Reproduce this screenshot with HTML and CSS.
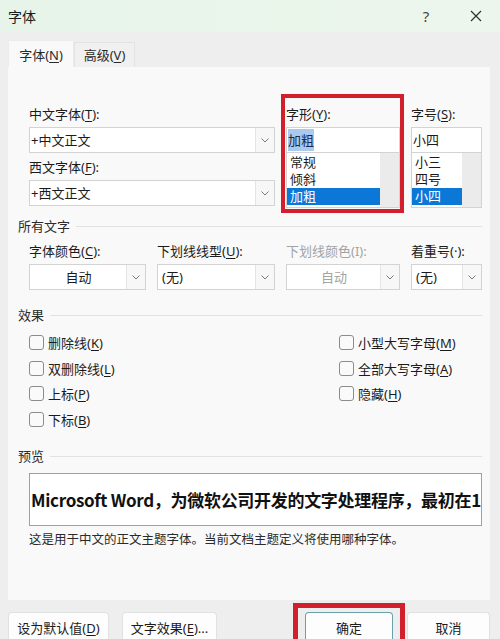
FILE: index.html
```html
<!DOCTYPE html>
<html lang="zh-CN">
<head>
  <meta charset="UTF-8" />
  <title>字体</title>
  <link rel="stylesheet" href="styles.css">
</head>
<body>
  <div class="titlebar">
    <span class="title">字体</span>
    <span class="help">?</span>
    <span class="close">
      <svg width="12" height="12" viewBox="0 0 12 12"><path d="M1 1 L11 11 M11 1 L1 11" stroke="#2b2b2b" stroke-width="1.1" fill="none"/></svg>
    </span>
  </div>

  <div class="tabs">
    <div class="tab active">字体(<u>N</u>)</div>
    <div class="tab">高级(<u>V</u>)</div>
  </div>

  <div class="panel">
    <!-- font face / style / size -->
    <div class="font-grid">
      <div class="col">
        <div class="lbl">中文字体(<u>T</u>):</div>
        <div class="combo">
          <span class="combo-text">+中文正文</span>
          <span class="combo-arrow"><svg width="8" height="5" viewBox="0 0 8 5"><path d="M0.5 0.5 L4 4 L7.5 0.5" stroke="#7a7a7a" fill="none"/></svg></span>
        </div>
        <div class="lbl lbl-next">西文字体(<u>F</u>):</div>
        <div class="combo">
          <span class="combo-text">+西文正文</span>
          <span class="combo-arrow"><svg width="8" height="5" viewBox="0 0 8 5"><path d="M0.5 0.5 L4 4 L7.5 0.5" stroke="#7a7a7a" fill="none"/></svg></span>
        </div>
      </div>

      <div class="col marked">
        <div class="lbl">字形(<u>Y</u>):</div>
        <div class="edit"><span class="sel-text">加粗</span></div>
        <div class="listbox">
          <div class="items">
            <div class="item">常规</div>
            <div class="item">倾斜</div>
            <div class="item selected">加粗</div>
          </div>
          <div class="scroll"></div>
        </div>
      </div>

      <div class="col">
        <div class="lbl">字号(<u>S</u>):</div>
        <div class="edit">小四</div>
        <div class="listbox">
          <div class="items">
            <div class="item">小三</div>
            <div class="item">四号</div>
            <div class="item selected">小四</div>
          </div>
          <div class="scroll"></div>
        </div>
      </div>
    </div>

    <div class="group-head">所有文字</div>
    <div class="attr-grid">
      <div class="col">
        <div class="lbl">字体颜色(<u>C</u>):</div>
        <div class="combo combo-small">
          <span class="combo-text center">自动</span>
          <span class="combo-arrow"><svg width="8" height="5" viewBox="0 0 8 5"><path d="M0.5 0.5 L4 4 L7.5 0.5" stroke="#7a7a7a" fill="none"/></svg></span>
        </div>
      </div>
      <div class="col">
        <div class="lbl">下划线线型(<u>U</u>):</div>
        <div class="combo combo-small">
          <span class="combo-text pad">(无)</span>
          <span class="combo-arrow"><svg width="8" height="5" viewBox="0 0 8 5"><path d="M0.5 0.5 L4 4 L7.5 0.5" stroke="#7a7a7a" fill="none"/></svg></span>
        </div>
      </div>
      <div class="col disabled">
        <div class="lbl">下划线颜色(I):</div>
        <div class="combo combo-small">
          <span class="combo-text center">自动</span>
          <span class="combo-arrow"><svg width="8" height="5" viewBox="0 0 8 5"><path d="M0.5 0.5 L4 4 L7.5 0.5" stroke="#7a7a7a" fill="none"/></svg></span>
        </div>
      </div>
      <div class="col">
        <div class="lbl">着重号(·):</div>
        <div class="combo combo-small">
          <span class="combo-text pad">(无)</span>
          <span class="combo-arrow"><svg width="8" height="5" viewBox="0 0 8 5"><path d="M0.5 0.5 L4 4 L7.5 0.5" stroke="#7a7a7a" fill="none"/></svg></span>
        </div>
      </div>
    </div>

    <div class="group-head head-effects">效果</div>
    <div class="effects">
      <div class="check-col">
        <label class="check"><span class="box"></span><span>删除线(<u>K</u>)</span></label>
        <label class="check"><span class="box"></span><span>双删除线(<u>L</u>)</span></label>
        <label class="check"><span class="box"></span><span>上标(<u>P</u>)</span></label>
        <label class="check"><span class="box"></span><span>下标(<u>B</u>)</span></label>
      </div>
      <div class="check-col">
        <label class="check"><span class="box"></span><span>小型大写字母(<u>M</u>)</span></label>
        <label class="check"><span class="box"></span><span>全部大写字母(<u>A</u>)</span></label>
        <label class="check"><span class="box"></span><span>隐藏(<u>H</u>)</span></label>
      </div>
    </div>

    <div class="group-head head-preview">预览</div>
    <div class="preview">Microsoft Word，为微软公司开发的文字处理程序，最初在1983年发布</div>
    <p class="caption">这是用于中文的正文主题字体。当前文档主题定义将使用哪种字体。</p>
  </div>

  <div class="buttons">
    <div class="btn btn-default">设为默认值(<u>D</u>)</div>
    <div class="btn btn-effects">文字效果(<u>E</u>)...</div>
    <div class="btn btn-ok marked-ok">确定</div>
    <div class="btn btn-cancel">取消</div>
  </div>
</body>
</html>
```

FILE: styles.css
```css
* {
  box-sizing: border-box;
}

body {
  margin: 0;
  width: 500px;
  height: 639px;
  overflow: hidden;
  background: #eeeeee;
  font-family: "Noto Sans", "Noto Sans CJK SC", sans-serif;
  font-size: 13px;
  color: #1b1b1b;
}

u {
  text-decoration-thickness: 1px;
  text-underline-offset: 2px;
}

/* Title bar */
.titlebar {
  height: 32px;
  background: linear-gradient(to right, #e6f4e9, #edf6ec);
  display: flex;
  align-items: center;
  padding: 0 14px 0 8px;
}

.title {
  font-size: 14px;
}

.help {
  margin-left: auto;
  width: 20px;
  text-align: center;
  font-size: 15px;
  color: #444;
}

.close {
  width: 20px;
  margin-left: 30px;
  display: flex;
  justify-content: center;
}

/* Tabs */
.tabs {
  display: flex;
  margin-top: 8px;
  padding-left: 8px;
  height: 27px;
}

.tab {
  height: 25px;
  margin-top: 2px;
  width: 61px;
  line-height: 24px;
  text-align: center;
  background: #f0f0f0;
  border: 1px solid #e3e3e3;
  border-bottom: 0;
  color: #2a2a2a;
}

.tab.active {
  width: 66px;
  height: 27px;
  margin-top: 0;
  line-height: 29px;
  background: #f9f9f9;
  border-color: #ececec;
}

/* Main panel */
.panel {
  margin: 0 10px 0 8px;
  height: 533px;
  background: #f9f9f9;
  padding: 39px 8px 0 21px;
}

.lbl {
  height: 17px;
  line-height: 17px;
  white-space: nowrap;
}

.lbl-next {
  margin-top: 6px;
}

.font-grid {
  display: grid;
  grid-template-columns: 246px 114px 71px;
  column-gap: 11px;
}

.col {
  position: relative;
}

/* red annotation frame */
.marked::after {
  content: "";
  position: absolute;
  left: -5px;
  right: -4px;
  top: -12px;
  bottom: -5px;
  border: 4px solid #d21f2c;
}

.combo {
  margin-top: 4px;
  height: 26px;
  display: flex;
  background: #fff;
  border: 1px solid #d3d3d3;
}

.combo-text {
  flex: 1;
  line-height: 24px;
  padding-left: 1px;
}

.combo-text.center {
  text-align: center;
}

.combo-text.pad {
  padding-left: 4px;
}

.combo-arrow {
  width: 19px;
  background: #f7f7f7;
  border-left: 1px solid #e4e4e4;
  display: flex;
  align-items: center;
  justify-content: center;
}

.edit {
  margin-top: 4px;
  height: 26px;
  background: #fff;
  border: 1px solid #d3d3d3;
  line-height: 24px;
  padding-left: 1px;
}

.sel-text {
  background: #a9c9ee;
  color: #1a2a4a;
  padding: 2px 0;
}

.listbox {
  height: 55px;
  display: flex;
  background: #fff;
  border: 1px solid #d3d3d3;
  border-top: 0;
  padding-top: 1px;
}

.items {
  flex: 1;
}

.item {
  height: 17px;
  line-height: 17px;
  padding-left: 3px;
  overflow: hidden;
}

.item.selected {
  background: #0b78d7;
  color: #fff;
}

.scroll {
  width: 19px;
  background: #ebebeb;
  margin-top: -1px;
}

/* group headers with rule */
.group-head {
  margin: 10px 0 0 -11px;
  height: 17px;
  line-height: 17px;
  display: flex;
  align-items: center;
  gap: 6px;
  color: #2b2b2b;
}

.group-head::after {
  content: "";
  flex: 1;
  height: 1px;
  background: #e2e2e2;
}

.attr-grid {
  margin-top: 8px;
  display: grid;
  grid-template-columns: 117px 118px 114px 71px;
  column-gap: 11px;
}

.disabled .lbl,
.disabled .combo-text {
  color: #a3a3a3;
}

.head-effects {
  margin-top: 17px;
}

.effects {
  margin-top: 6px;
  display: grid;
  grid-template-columns: 310px auto;
}

.check {
  height: 25.6px;
  display: flex;
  align-items: center;
  gap: 4px;
}

.box {
  width: 15px;
  height: 15px;
  border: 1px solid #8c8c8c;
  border-radius: 3px;
  background: #fafafa;
}

.head-preview {
  margin-top: 16px;
}

.preview {
  margin-top: 8px;
  height: 53px;
  background: #fff;
  border: 1px solid #a0a0a0;
  padding-left: 1px;
  line-height: 51px;
  font-family: "Noto Sans CJK SC", sans-serif;
  font-size: 17px;
  font-weight: bold;
  letter-spacing: -0.3px;
  white-space: nowrap;
  overflow: hidden;
  color: #111;
}

.caption {
  margin: 5px 0 0;
  font-size: 12.5px;
  line-height: 17px;
  color: #2b2b2b;
}

/* Bottom buttons */
.buttons {
  margin-top: 12px;
  display: flex;
  padding-left: 8px;
}

.btn {
  height: 27px;
  line-height: 31px;
  text-align: center;
  background: #fdfdfd;
  border: 1px solid #e1e1e1;
  border-bottom: 0;
  border-radius: 4px 4px 0 0;
  position: relative;
}

.btn-default {
  width: 101px;
}

.btn-effects {
  width: 95px;
  margin-left: 13px;
}

.btn-ok {
  width: 88px;
  margin-left: 88px;
  border-color: #6b9fab;
}

.btn-cancel {
  width: 83px;
  margin-left: 14px;
}

.marked-ok::after {
  content: "";
  position: absolute;
  left: -13px;
  right: -13px;
  top: -10px;
  bottom: 0;
  border: 5px solid #d21f2c;
  border-bottom: 0;
}
```
